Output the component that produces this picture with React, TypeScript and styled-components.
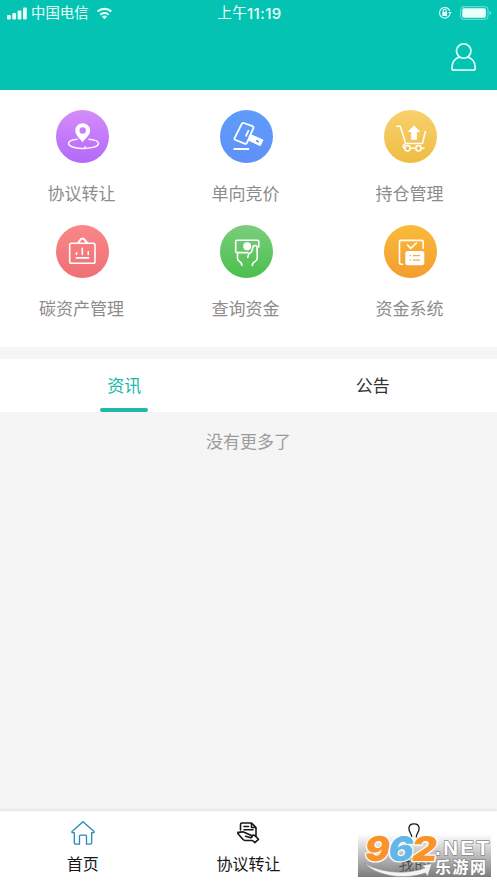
import React from 'react';
import styled, { createGlobalStyle } from 'styled-components';

const GlobalStyle = createGlobalStyle`
  * { box-sizing: border-box; }
  body {
    margin: 0;
    background: #f5f5f5;
    font-family: "Liberation Sans", "Noto Sans CJK SC", sans-serif;
  }
`;

const Screen = styled.div`
  width: 497px;
  height: 883px;
  display: flex;
  flex-direction: column;
  background: #f5f5f5;
  overflow: hidden;
`;

const Header = styled.header`
  height: 90px;
  flex: none;
  background: #05c3b3;
`;

const StatusBar = styled.div`
  height: 25px;
  display: grid;
  grid-template-columns: 1fr auto 1fr;
  align-items: center;
  padding: 0 5px 0 7px;
  color: #e9fffc;
  font-size: 14.4px;
  line-height: 25px;
`;

const StatusGroup = styled.div<{ $end?: boolean }>`
  display: flex;
  align-items: center;
  justify-content: ${(p) => (p.$end ? 'flex-end' : 'flex-start')};
  gap: ${(p) => (p.$end ? '8px' : '4px')};
`;

const Clock = styled.span`
  display: flex;
  align-items: center;
  font-size: 14.8px;
`;

const ClockDigits = styled.span`
  font-family: Inter, sans-serif;
  font-size: 15px;
  font-weight: 500;
  letter-spacing: 0.4px;
`;

const Carrier = styled.span`
  margin-right: 3px;
  padding-top: 1px;
`;

const HeaderActions = styled.div`
  display: flex;
  justify-content: flex-end;
  padding: 17px 20px 0 0;
`;

const Icon = styled.svg`
  display: block;
  flex: none;
  fill: none;
  stroke: currentColor;
  stroke-linecap: round;
  stroke-linejoin: round;
`;

const ProfileButton = styled.button`
  padding: 0;
  border: 0;
  background: none;
  color: #d8fffa;
`;

const Menu = styled.section`
  height: 257px;
  flex: none;
  display: grid;
  grid-template-columns: repeat(3, 164px);
  grid-auto-rows: 115px;
  padding-top: 20px;
  background: #fff;
`;

const MenuItem = styled.div`
  display: flex;
  flex-direction: column;
  align-items: center;
`;

const Disc = styled.div<{ $from: string; $to: string }>`
  width: 53px;
  height: 53px;
  border-radius: 50%;
  color: #fff;
  background: linear-gradient(${(p) => p.$from}, ${(p) => p.$to});
`;

const MenuLabel = styled.span`
  margin-top: 19px;
  margin-right: 1px;
  font-size: 17px;
  line-height: 25px;
  color: #8c8c8c;
`;

const Tabs = styled.nav`
  margin-top: 12px;
  height: 53px;
  flex: none;
  display: grid;
  grid-template-columns: 1fr 1fr;
  background: #fff;
`;

const Tab = styled.div<{ $active?: boolean }>`
  display: flex;
  flex-direction: column;
  align-items: center;
  justify-content: space-between;
  padding-top: 15px;
  font-size: 17px;
  line-height: 25px;
  color: ${(p) => (p.$active ? '#1ab7a8' : '#333')};
  &::after {
    content: '';
    width: 48px;
    height: 4px;
    border-radius: 2px;
    background: ${(p) => (p.$active ? '#1fb8aa' : 'transparent')};
  }
`;

const Feed = styled.main`
  flex: 1;
  padding-top: 18px;
  text-align: center;
  font-size: 17px;
  line-height: 25px;
  color: #9c9c9c;
`;

const BottomBar = styled.footer`
  position: relative;
  height: 72px;
  flex: none;
  display: grid;
  grid-template-columns: repeat(3, 1fr);
  background: #fff;
  box-shadow: 0 -1px 3px rgba(0, 0, 0, 0.1);
`;

const BottomItem = styled.div`
  display: flex;
  flex-direction: column;
  align-items: center;
  padding-top: 9px;
  font-size: 16px;
  line-height: 24px;
  color: #181818;
`;

const BottomLabel = styled.span`
  margin-top: 7px;
`;

const Watermark = styled.div`
  position: absolute;
  right: 6px;
  bottom: 6px;
  width: 133px;
  height: 43px;
  background: linear-gradient(rgba(255, 255, 255, 0), rgba(110, 110, 110, 0.9));
`;

const WatermarkArt = styled.svg`
  display: block;
  overflow: visible;
`;

const PinIcon = () => (
  <Icon width="53" height="53" viewBox="0 0 53 53" strokeWidth="1.4">
    <path d="M21 29.2c-5 .6-8.5 2.2-8.5 4.2 0 2.9 6.4 5 13.2 5.1M29 38.4c7.6-.2 13.5-2.2 13.5-4.8 0-2.3-4-3.8-9.500-4.300M25.700 38.500H29v-1.800" />
    <path d="M26.5 32.3c-3-4-7.2-7.1-7.2-11.7a7.4 7.4 0 0 1 14.8 0c0 4.6-4.5 7.7-7.6 11.7ZM26.7 17.3a3.2 3.2 0 1 0 0 6.4 3.2 3.2 0 0 0 0-6.4Z" fill="currentColor" fillRule="evenodd" stroke="none" />
  </Icon>
);

const GavelIcon = () => (
  <Icon width="53" height="53" viewBox="0 0 53 53" strokeWidth="1.8">
    <path d="M23.8 13 32.4 16.2q1.6.7.9 2.2l-6.4 14.4q-.7 1.4-2.2.8l-9.2-3.6q-1.6-.7-.8-2.2l7-13.8q.7-1.5 2.1-1ZM28.4 20.8l-2.4 5" />
    <path d="m31.3 25.2 11.4 4.9-2.7 5.3-11.1-5.4Z" fill="currentColor" strokeWidth="1.4" />
    <path d="m36.4 29.8 3 1.4-.8 1.5-3-1.4Z" fill="#6495f9" stroke="none" />
    <path d="M14.3 38.9h14" strokeWidth="2" />
  </Icon>
);

const CartIcon = () => (
  <Icon width="53" height="53" viewBox="0 0 53 53" strokeWidth="1.5">
    <path d="M12.8 16.3h3.5l5.4 17.3h16.8M41.3 21.5l-2.8 12.1M21.6 33.6c-3.2 1.1-3.1 4.1-.8 4.4" />
    <circle cx="23.5" cy="38.2" r="2.7" />
    <circle cx="34.5" cy="38.2" r="2.7" />
    <path d="M26.5 38.2h5.2M37.5 38.2h2.5" />
    <path d="M30 15.3 36.4 22h-3.5v7.8h-5.8V22h-3.5Z" fill="currentColor" stroke="none" />
  </Icon>
);

const CarbonIcon = () => (
  <Icon width="53" height="53" viewBox="0 0 53 53" strokeWidth="1.6">
    <rect x="13.7" y="18.2" width="25.3" height="20" rx="1.8" />
    <path d="M22.3 17.6c1.2-.8 1.5-4.1 4.2-4.1s3 3.3 4.4 4.1" strokeWidth="2" />
    <path d="M20.5 27.7v1.8M26.3 23.4v6.1M32.2 26.7v2.8M20.2 32.9h12.5" />
  </Icon>
);

const FundsIcon = () => (
  <Icon width="53" height="53" viewBox="0 0 53 53" strokeWidth="1.6">
    <path d="M28 27.6H17q-1.3 0-1.3-1.3V16.5q0-1.3 1.3-1.3h20.5q1.3 0 1.3 1.3V22M17.5 28v5.2q0 2 1.8 3.1 2.5 1.6 2.5 4M37.2 24v9.2q0 2-2 3.2-3 1.5-3 4" />
    <path d="M37.2 25.5V23c0-3.4-4.1-3.2-4.5-.2-.4 3-1 4.8-3 5.4-1.5.6-1.7 2.5-1.9 4.3" />
    <circle cx="27.2" cy="21.2" r="4" fill="currentColor" stroke="none" />
  </Icon>
);

const SystemIcon = () => (
  <Icon width="53" height="53" viewBox="0 0 53 53" strokeWidth="1.6">
    <path d="M18.5 39.2H17q-1.5 0-1.5-1.5V16.9q0-1.5 1.5-1.5h20.7q1.5 0 1.5 1.5v6.3M23.5 20l3.2 3.4 5.7-5.4" />
    <rect x="21.3" y="26" width="19" height="14.2" rx="2.5" fill="currentColor" stroke="none" />
    <path d="M26.2 30.7h.5M29.5 30.7h6M26.2 35.2h.5M29.5 35.2h6" stroke="#f5ae3b" strokeWidth="1.3" />
  </Icon>
);

const MENU = [
  { label: '协议转让', from: '#d48df8', to: '#b468fa', icon: <PinIcon /> },
  { label: '单向竞价', from: '#5e9cfa', to: '#6090f8', icon: <GavelIcon /> },
  { label: '持仓管理', from: '#f8d06d', to: '#eebd43', icon: <CartIcon /> },
  { label: '碳资产管理', from: '#fa8788', to: '#ee7074', icon: <CarbonIcon /> },
  { label: '查询资金', from: '#7bce7c', to: '#4bbf4d', icon: <FundsIcon /> },
  { label: '资金系统', from: '#fabb3a', to: '#f39d30', icon: <SystemIcon /> },
];

const SiteMark = () => (
  <Watermark>
    <WatermarkArt width="133" height="43" viewBox="0 0 133 43">
      <path d="M6 29c17 10 42 12 61 5l-3-2.5 10-2-4.5 13-2-3.5C46 46.5 18 42 6 29Z" fill="#f4f4f4" stroke="#888" strokeWidth=".6" />
      <g transform="translate(4.3 0) skewX(-9)" fontFamily="Inter" fontWeight="900" stroke="#fff" strokeWidth="2.4" paintOrder="stroke" strokeLinejoin="round">
        <text x="5.5" y="26.5" fontSize="34" textLength="25" lengthAdjust="spacingAndGlyphs" fill="#f89429">9</text>
        <text x="29" y="26.5" fontSize="34" textLength="25" lengthAdjust="spacingAndGlyphs" fill="#62b6e8">6</text>
        <text x="52.5" y="26.5" fontSize="34" textLength="25" lengthAdjust="spacingAndGlyphs" fill="#f89429">2</text>
      </g>
      <g fontFamily="Liberation Sans, Noto Sans CJK SC" fontWeight="700" fill="#fff" stroke="#888" strokeWidth="1.5" paintOrder="stroke" strokeLinejoin="round">
        <text x="77" y="20.5" fontSize="20.5" textLength="54">.NET</text>
        <text x="77" y="38.5" fontSize="16" textLength="51">乐游网</text>
      </g>
    </WatermarkArt>
  </Watermark>
);

export default function App() {
  return (
    <>
      <GlobalStyle />
      <Screen>
        <Header>
          <StatusBar>
            <StatusGroup>
              <Icon width="20" height="13" viewBox="0 0 20 13">
                <g fill="currentColor" stroke="none">
                  <rect x="0" y="8" width="3.8" height="4.5" rx="1" />
                  <rect x="5.3" y="6" width="3.8" height="6.5" rx="1" />
                  <rect x="10.6" y="3.5" width="3.8" height="9" rx="1" />
                  <rect x="16" y="0.5" width="3.8" height="12" rx="1" />
                </g>
              </Icon>
              <Carrier>中国电信</Carrier>
              <Icon width="17" height="13" viewBox="0 0 18 13" strokeWidth="2.2">
                <path d="M1.7 4.5a10.6 10.6 0 0 1 14.6 0M4.6 7.8a6.4 6.4 0 0 1 8.8 0" strokeLinecap="butt" />
                <path d="M9 12.6 6.4 10a3.7 3.7 0 0 1 5.2 0Z" fill="currentColor" stroke="none" />
              </Icon>
            </StatusGroup>
            <Clock>上午<ClockDigits>11:19</ClockDigits></Clock>
            <StatusGroup $end>
              <Icon width="14" height="14" viewBox="0 0 14 14" strokeWidth="1.1">
                <path d="M11.8 8.6a5.3 5.3 0 1 1-.2-4.1" />
                <path d="m10.2 6.1 1.9 2.2L13.8 6Z" fill="currentColor" stroke="none" />
                <rect x="4.3" y="6.1" width="4.8" height="3.8" rx=".5" fill="currentColor" stroke="none" />
                <path d="M5.2 6V4.8a1.5 1.5 0 0 1 3 0V6" />
              </Icon>
              <Icon width="32" height="14" viewBox="0 0 32 14">
                <rect x=".7" y=".7" width="27.3" height="12.6" rx="3" opacity=".5" />
                <rect x="2.3" y="2.3" width="23.6" height="9.4" rx="1.6" fill="currentColor" stroke="none" />
                <path d="M29.5 5v4q1.600-.5 1.600-2t-1.600-2Z" fill="currentColor" stroke="none" opacity=".5" />
              </Icon>
            </StatusGroup>
          </StatusBar>
          <HeaderActions>
            <ProfileButton aria-label="profile">
              <Icon width="27" height="30" viewBox="0 0 27 30" strokeWidth="1.8">
                <circle cx="13.7" cy="9" r="7.2" />
                <path d="M9.5 15.1C5 16.4 2 20.4 2 25.2v1q0 2 2 2h19.2q2 0 2-2v-1c0-4.8-3-8.8-7.5-10.1" />
              </Icon>
            </ProfileButton>
          </HeaderActions>
        </Header>
        <Menu>
          {MENU.map((m) => (
            <MenuItem key={m.label}>
              <Disc $from={m.from} $to={m.to}>{m.icon}</Disc>
              <MenuLabel>{m.label}</MenuLabel>
            </MenuItem>
          ))}
        </Menu>
        <Tabs>
          <Tab $active>资讯</Tab>
          <Tab>公告</Tab>
        </Tabs>
        <Feed>没有更多了</Feed>
        <BottomBar>
          <BottomItem>
            <Icon width="26" height="26" viewBox="0 0 26 26" strokeWidth="1.3" color="#2389ba">
              <path d="M13 1.8 24 11.5q.4 1.2-.8 1.2h-1.5v9.8q0 1.7-1.7 1.7h-3.5v-8q0-1-1-1h-5q-1 0-1 1v8H6q-1.7 0-1.7-1.7v-9.8H2.8q-1.3 0-.8-1.2Z" />
            </Icon>
            <BottomLabel>首页</BottomLabel>
          </BottomItem>
          <BottomItem>
            <Icon width="26" height="26" viewBox="0 0 26 26" strokeWidth="1.6">
              <path d="M5.5 10V4.500q0-1.500 1.500-1.500h9.500l4.500 4.500V16M16.500 3v4.500H21M9 6.500h4.500M9 9.800h9" />
              <path d="M2.8 12.300c2.500.3 3.600-1 6.400-.1l7.200 3.300c1.500.9.4 2.500-1.200 2.100l-4.500-1.300M2.800 13.500l5 5.800q1 1.200 2.400 1.200h6.500q1 0 1.800.8l1.300 1.300 3.700-3.300-3.300-3.400q-1.200-1.200-3-.5" />
            </Icon>
            <BottomLabel>协议转让</BottomLabel>
          </BottomItem>
          <BottomItem>
            <Icon width="26" height="26" viewBox="0 0 26 26" strokeWidth="1.3">
              <path d="M10.7 16.8c.2-2.700-2.800-4.500-2.800-8.200C7.900 5.400 10 3.800 13 3.800s5.100 1.600 5.100 4.800c0 3.700-3 5.500-2.800 8.200" />
              <path d="M10.7 16.8c-.2 2.200-7.700 1.600-7.700 7.200h20c0-5.600-7.500-5-7.700-7.200" opacity=".25" />
            </Icon>
            <BottomLabel>我的</BottomLabel>
          </BottomItem>
          <SiteMark />
        </BottomBar>
      </Screen>
    </>
  );
}
